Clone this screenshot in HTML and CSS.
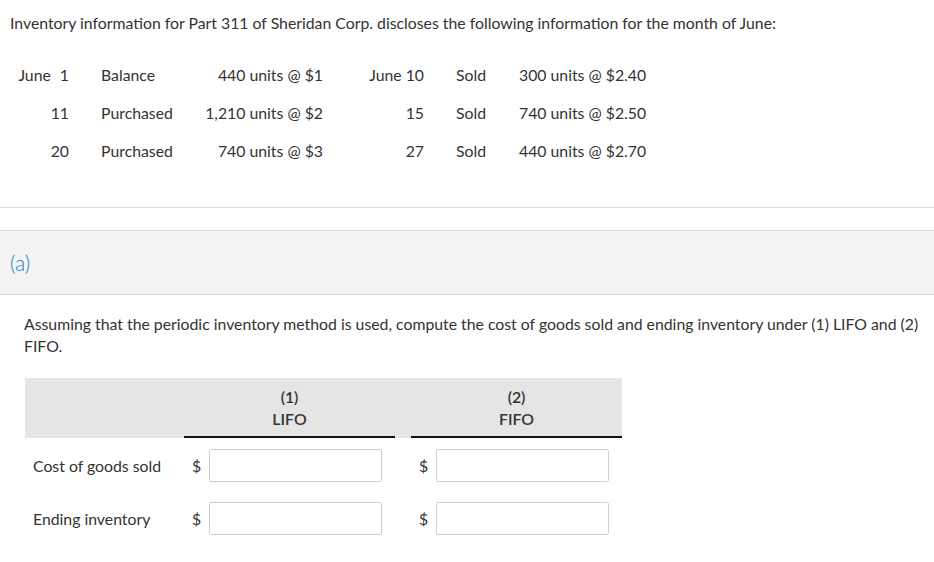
FILE: index.html
```html
<!DOCTYPE html>
<html>
<head>
<meta charset="utf-8">
<link rel="stylesheet" href="styles.css">
</head>
<body>
<p class="intro">Inventory information for Part 311 of Sheridan Corp. discloses the following information for the month of June:</p>
<div class="data">
  <div class="r"><span class="mo">June</span>1</div><div class="l">Balance</div><div class="r">440 units @ $1</div>
  <div class="r">June 10</div><div class="l">Sold</div><div class="l2">300 units @ $2.40</div>

  <div class="r">11</div><div class="l">Purchased</div><div class="r">1,210 units @ $2</div>
  <div class="r">15</div><div class="l">Sold</div><div class="l2">740 units @ $2.50</div>

  <div class="r">20</div><div class="l">Purchased</div><div class="r">740 units @ $3</div>
  <div class="r">27</div><div class="l">Sold</div><div class="l2">440 units @ $2.70</div>
</div>
<hr class="divider">
<div class="part"><span class="part-label">(a)</span></div>
<p class="question">Assuming that the periodic inventory method is used, compute the cost of goods sold and ending inventory under (1) LIFO and (2) FIFO.</p>
<div class="ans">
  <div class="ans-head">
    <div></div>
    <div class="hcell">(1)<br>LIFO</div>
    <div></div>
    <div class="hcell">(2)<br>FIFO</div>
  </div>
  <div class="ans-row">
    <div class="lbl">Cost of goods sold</div>
    <div class="cell"><span class="cur">$</span><input class="box" type="text"></div>
    <div></div>
    <div class="cell"><span class="cur">$</span><input class="box" type="text"></div>
  </div>
  <div class="ans-row">
    <div class="lbl">Ending inventory</div>
    <div class="cell"><span class="cur">$</span><input class="box" type="text"></div>
    <div></div>
    <div class="cell"><span class="cur">$</span><input class="box" type="text"></div>
  </div>
</div>
</body>
</html>
```
FILE: styles.css
```css
html, body {
  margin: 0;
  padding: 0;
  background: #fff;
}
body {
  font-family: Lato, "Open Sans", "Liberation Sans", sans-serif;
  font-size: 15.8px;
  color: #333;
}
.intro {
  margin: 0;
  padding: 13px 0 0 10px;
  line-height: 20px;
}
.data {
  display: grid;
  grid-template-columns: 69px 131px 123px 101px 95px auto;
  grid-auto-rows: 38px;
  line-height: 38px;
  margin-top: 23px;
}
.data .r { text-align: right; }
.data .l { padding-left: 32px; }
.data .l2 { padding-left: 0; }
.mo { margin-right: 9px; }
.divider {
  margin: 37px 0 0 0;
  border: 0;
  border-top: 1px solid #d9d9d9;
  height: 0;
}
.part {
  margin-top: 22px;
  height: 63px;
  background: #f3f3f3;
  border-top: 1px solid #dcdcdc;
  border-bottom: 1px solid #dcdcdc;
  display: flex;
  align-items: center;
  padding-left: 10px;
}
.part-label {
  color: #1a7dbf;
  font-size: 21px;
  font-weight: 300;
}
.question {
  margin: 18px 0 0 0;
  padding: 0 8px 0 24px;
  line-height: 22px;
}
.ans {
  margin: 21px 0 0 25px;
  width: 597px;
}
.ans-head, .ans-row {
  display: grid;
  grid-template-columns: 159px 211px 16px 211px;
}
.ans-head {
  background: #e5e5e5;
  height: 60px;
}
.hcell {
  box-sizing: border-box;
  border-bottom: 2px solid #111;
  display: flex;
  flex-direction: column;
  align-items: center;
  justify-content: center;
  text-align: center;
  line-height: 22px;
  font-weight: 600;
  padding-top: 2px;
}
.ans-row {
  height: 53px;
  align-items: start;
}
.lbl {
  padding: 11px 0 0 8px;
  line-height: 33px;
}
.cell {
  display: flex;
  align-items: center;
  padding: 11px 0 0 8px;
}
.cur {
  width: 17px;
  line-height: 33px;
}
.box {
  box-sizing: border-box;
  width: 173px;
  height: 33px;
  margin: 0;
  border: 1px solid #cfcfcf;
  border-radius: 2px;
  background: #fff;
  padding: 0 6px;
  font: inherit;
  outline: none;
}
```
